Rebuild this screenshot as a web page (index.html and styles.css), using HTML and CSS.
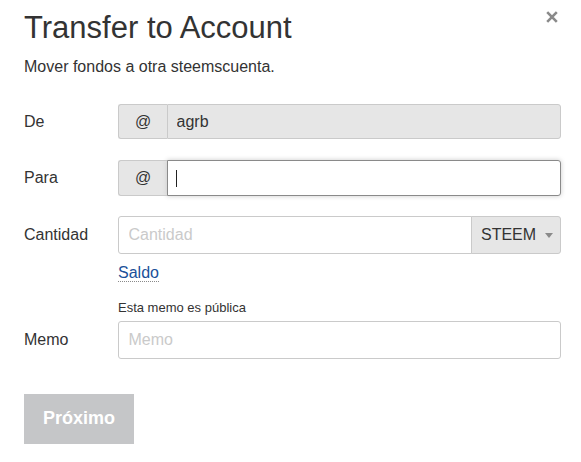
FILE: index.html
```html
<!DOCTYPE html>
<html lang="es">
<head>
<meta charset="utf-8">
<title>Transfer to Account</title>
<link rel="stylesheet" href="styles.css">
</head>
<body>
<div class="modal">
  <button class="close" aria-label="Cerrar">
    <svg width="12" height="12" viewBox="0 0 12 12"><path d="M1.2 1.2 L10.8 10.8 M10.8 1.2 L1.2 10.8" stroke="#8a8a8a" stroke-width="2.6" stroke-linecap="butt"/></svg>
  </button>
  <h3 class="title">Transfer to Account</h3>
  <p class="subtitle">Mover fondos a otra steemscuenta.</p>

  <div class="row row-de">
    <label class="label">De</label>
    <div class="group h35">
      <span class="prefix">@</span>
      <input class="field field-disabled" value="agrb" disabled>
    </div>
  </div>

  <div class="row row-para">
    <label class="label">Para</label>
    <div class="group h36">
      <span class="prefix">@</span>
      <div class="focus-wrap">
        <input class="field field-focus" value="">
        <span class="caret"></span>
      </div>
    </div>
  </div>

  <div class="row row-cant">
    <label class="label">Cantidad</label>
    <div class="group h38">
      <input class="field field-amount" placeholder="Cantidad">
      <div class="select">STEEM<span class="arrow"></span></div>
    </div>
  </div>

  <div class="row row-saldo">
    <span></span>
    <div><a class="saldo" href="#">Saldo</a></div>
  </div>

  <div class="row row-note">
    <span></span>
    <div class="note">Esta memo es pública</div>
  </div>

  <div class="row row-memo">
    <label class="label">Memo</label>
    <div class="group h38">
      <input class="field field-memo" placeholder="Memo">
    </div>
  </div>

  <button class="submit">Próximo</button>
</div>
</body>
</html>
```
FILE: styles.css
```css
* { box-sizing: border-box; }

html, body {
  margin: 0;
  padding: 0;
  background: #fff;
}

body {
  font-family: "Liberation Sans", Arial, sans-serif;
  color: #333;
  font-size: 16px;
}

.modal {
  position: relative;
  padding: 10px 20px 0 24px;
}

.close {
  position: absolute;
  left: 546px;
  top: 11px;
  width: 12px;
  height: 12px;
  padding: 0;
  margin: 0;
  border: 0;
  background: none;
  line-height: 0;
}

.title {
  margin: 0;
  font-size: 31px;
  line-height: 36px;
  font-weight: normal;
  color: #333;
}

.subtitle {
  margin: 10.5px 0 0;
  font-size: 16px;
  line-height: 20px;
}

.row {
  display: grid;
  grid-template-columns: 94px 1fr;
  align-items: center;
}

.label {
  font-size: 16px;
  line-height: 20px;
  color: #333;
}

.row-de { margin-top: 27.5px; }
.row-para { margin-top: 21px; }
.row-cant { margin-top: 20px; }
.row-saldo { margin-top: 8.7px; }
.row-note { margin-top: 17.5px; }
.row-memo { margin-top: 4.5px; }

.group {
  display: flex;
  width: 100%;
}
.h35 { height: 35px; }
.h36 { height: 36px; }
.h38 { height: 38px; }

.prefix {
  flex: 0 0 49px;
  display: flex;
  align-items: center;
  justify-content: center;
  background: #e6e6e6;
  border: 1px solid #cacaca;
  border-right: 0;
  border-radius: 3px 0 0 3px;
  font-size: 16px;
  color: #333;
}

.field {
  flex: 1 1 auto;
  min-width: 0;
  height: 100%;
  margin: 0;
  padding: 0 8.5px;
  font-family: "Liberation Sans", Arial, sans-serif;
  font-size: 16px;
  color: #333;
  border: 1px solid #cacaca;
  background: #fff;
  outline: none;
}
.field::placeholder { color: #cacaca; opacity: 1; }

.field-disabled {
  background: #e6e6e6;
  color: #333;
  -webkit-text-fill-color: #333;
  border-radius: 0 3px 3px 0;
}

.focus-wrap {
  position: relative;
  flex: 1 1 auto;
  display: flex;
}

.field-focus {
  width: 100%;
  border-color: #8a8a8a;
  border-radius: 0 3px 3px 0;
  box-shadow: 0 0 5px #cacaca;
  caret-color: transparent;
}

.caret {
  position: absolute;
  left: 9px;
  top: 10px;
  width: 1px;
  height: 17px;
  background: #222;
}

.field-amount {
  border-radius: 3px 0 0 3px;
  padding-left: 9.5px;
}

.select {
  flex: 0 0 90px;
  display: flex;
  align-items: center;
  padding-left: 9px;
  background: #e6e6e6;
  border: 1px solid #cacaca;
  margin-left: -1px;
  border-radius: 0 3px 3px 0;
  font-size: 16px;
  color: #333;
}

.arrow {
  margin-left: 9px;
  width: 0;
  height: 0;
  border-left: 4px solid transparent;
  border-right: 4px solid transparent;
  border-top: 5px solid #8a8a8a;
}

.saldo {
  font-size: 16px;
  line-height: 20px;
  color: #1a5099;
  text-decoration: none;
  border-bottom: 1px dotted #8a8a8a;
}
.row-saldo > div { line-height: 20px; }

.note {
  font-size: 13px;
  line-height: 16px;
  color: #333;
}

.field-memo {
  border-radius: 3px;
  padding-left: 9.5px;
}

.submit {
  display: block;
  margin-top: 35px;
  width: 110px;
  height: 50px;
  padding: 0;
  border: 0;
  background: #c5c6c8;
  color: #fff;
  font-family: "Liberation Sans", Arial, sans-serif;
  font-weight: bold;
  font-size: 18px;
}
```
